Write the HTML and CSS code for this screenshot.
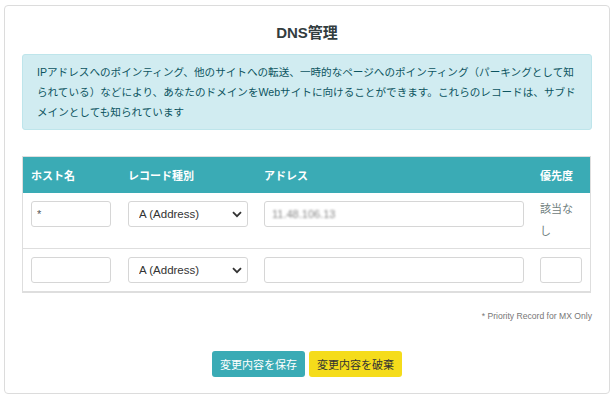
FILE: index.html
```html
<!DOCTYPE html>
<html>
<head>
    <title>DNS管理</title>
    <link rel="stylesheet" href="styles.css">
</head>
<body>
    <div class="panel-dns">
        <h1>DNS管理</h1>
        <div class="aviso-info">
            IPアドレスへのポインティング、他のサイトへの転送、一時的なページへのポインティング（パーキングとして知られている）などにより、あなたのドメインをWebサイトに向けることができます。これらのレコードは、サブドメインとしても知られています
        </div>

        <table class="tabla-dns">
            <thead>
                <tr>
                    <th class="col-host">ホスト名</th>
                    <th class="col-tipo">レコード種別</th>
                    <th class="col-dir">アドレス</th>
                    <th class="col-prio">優先度</th>
                </tr>
            </thead>
            <tbody>
                <tr>
                    <td><input type="text" class="campo campo-host" value="*"></td>
                    <td>
                        <div class="selector">
                            <select class="campo campo-tipo">
                                <option>A (Address)</option>
                            </select>
                            <svg class="flecha" width="10" height="7" viewBox="0 0 10 7"><path d="M1 1.2 L5 5.2 L9 1.2" fill="none" stroke="#333" stroke-width="1.8"/></svg>
                        </div>
                    </td>
                    <td><div class="campo campo-dir"><span class="borroso">11.48.106.13</span></div></td>
                    <td class="sin-prio">該当なし</td>
                </tr>
                <tr>
                    <td><input type="text" class="campo campo-host"></td>
                    <td>
                        <div class="selector">
                            <select class="campo campo-tipo">
                                <option>A (Address)</option>
                            </select>
                            <svg class="flecha" width="10" height="7" viewBox="0 0 10 7"><path d="M1 1.2 L5 5.2 L9 1.2" fill="none" stroke="#333" stroke-width="1.8"/></svg>
                        </div>
                    </td>
                    <td><input type="text" class="campo campo-dir"></td>
                    <td><input type="text" class="campo campo-prio"></td>
                </tr>
            </tbody>
        </table>

        <p class="nota">* Priority Record for MX Only</p>

        <div class="acciones">
            <button class="btn btn-guardar">変更内容を保存</button>
            <button class="btn btn-descartar">変更内容を破棄</button>
        </div>
    </div>
</body>
</html>
```

FILE: styles.css
```css
body {
    font-family: 'Liberation Sans', 'Noto Sans CJK JP', sans-serif;
    background-color: #fff;
    margin: 0;
    padding: 5px 5px 0 4px;
}
.panel-dns {
    width: 570px;
    border: 1px solid #dcdcdc;
    border-radius: 4px;
    padding: 17px 17px 16px;
}
h1 {
    margin: 0 0 11px;
    font-size: 15px;
    line-height: 20px;
    text-align: center;
    color: #333d3f;
}
.aviso-info {
    background-color: #d1ecf1;
    border: 1px solid #bee5eb;
    border-radius: 3px;
    color: #0c5460;
    font-size: 10.6px;
    line-height: 20px;
    padding: 7px 8px 7px 14px;
}
.tabla-dns {
    width: 569px;
    margin-top: 26px;
    border-collapse: collapse;
    table-layout: fixed;
    border: 1px solid #dedede;
    border-bottom: 2px solid #dedede;
    font-size: 11px;
}
.tabla-dns th {
    background-color: #3aabb5;
    color: #fff;
    font-weight: bold;
    text-align: left;
    height: 36px;
    padding: 0 8px;
    border: none;
}
.col-host { width: 81px; }
.col-tipo { width: 120px; }
.col-dir { width: 260px; }
.tabla-dns td {
    padding: 8px;
    vertical-align: top;
    border-top: 1px solid #dedede;
}
.tabla-dns tbody tr:first-child td {
    border-top: none;
}
.campo {
    display: block;
    box-sizing: border-box;
    height: 26px;
    border: 1px solid #d6d6d6;
    border-radius: 3px;
    background: #fff;
    font-family: inherit;
    font-size: 11px;
    color: #555;
    padding: 0 5px;
    margin: 0;
}
.campo-host { width: 80px; }
.campo-dir { width: 260px; }
.campo-prio { width: 42px; }
div.campo-dir {
    line-height: 24px;
    padding: 0 7px;
}
.borroso {
    color: #888;
    filter: blur(1.1px);
}
.selector {
    position: relative;
    width: 120px;
}
.campo-tipo {
    width: 120px;
    -webkit-appearance: none;
    appearance: none;
    padding: 0 10px;
    color: #333;
    font-size: 11.5px;
}
.flecha {
    position: absolute;
    right: 6px;
    top: 10px;
    pointer-events: none;
}
.sin-prio {
    color: #6f8080;
    line-height: 22px;
    padding-top: 5px !important;
    padding-bottom: 6px !important;
}
.nota {
    text-align: right;
    font-size: 8.6px;
    color: #777;
    margin: 17px 0 0;
    line-height: 12px;
}
.acciones {
    display: flex;
    justify-content: center;
    gap: 4px;
    margin-top: 29px;
}
.btn {
    height: 26px;
    border: none;
    border-radius: 3px;
    font-family: inherit;
    font-size: 11px;
    padding: 0 8px;
    cursor: pointer;
}
.btn-guardar {
    background-color: #3aabb5;
    color: #fff;
}
.btn-descartar {
    background-color: #f5dc1b;
    color: #333;
}
```
